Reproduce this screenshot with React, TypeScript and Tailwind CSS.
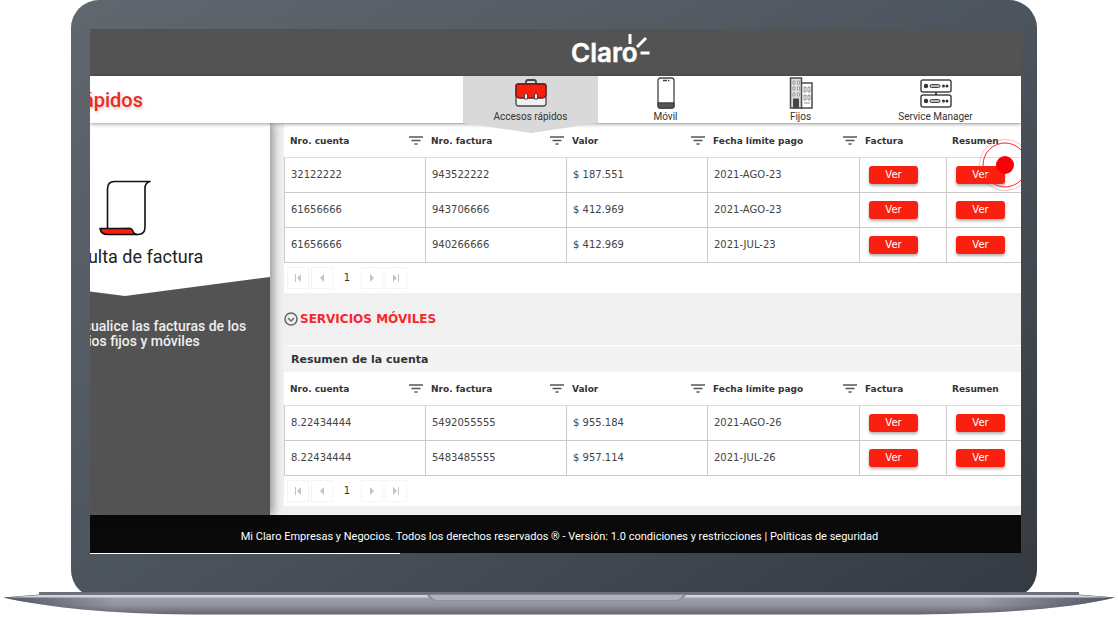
import React from 'react';

type Row = { cuenta: string; factura: string; valor: string; fecha: string };

const fijos: Row[] = [
  { cuenta: '32122222', factura: '943522222', valor: '$ 187.551', fecha: '2021-AGO-23' },
  { cuenta: '61656666', factura: '943706666', valor: '$ 412.969', fecha: '2021-AGO-23' },
  { cuenta: '61656666', factura: '940266666', valor: '$ 412.969', fecha: '2021-JUL-23' },
];

const moviles: Row[] = [
  { cuenta: '8.22434444', factura: '5492055555', valor: '$ 955.184', fecha: '2021-AGO-26' },
  { cuenta: '8.22434444', factura: '5483485555', valor: '$ 957.114', fecha: '2021-JUL-26' },
];

function ClaroLogo() {
  return (
    <svg width="80" height="34" viewBox="0 0 80 34" role="img" aria-label="Claro">
      <text x="0" y="28" fontSize="26" fontWeight="600" fill="#fff" stroke="#fff" strokeWidth=".5" fontFamily="Inter, sans-serif">Claro</text>
      <path d="M59 0v10M66 13l9-9M69.500 19h9" stroke="#fff" strokeWidth="3" fill="none" />
    </svg>
  );
}

function BriefcaseIcon() {
  return (
    <svg width="32" height="30" viewBox="0 0 32 30" fill="none" stroke="#444" strokeWidth="1.300">
      <path d="M11 4.500V3q0-2 2-2h6q2 0 2 2v1.500" strokeWidth="1.800" />
      <rect x="1" y="5" width="30" height="22" rx="2.500" fill="#f1f1f1" />
      <path d="M3 5h26q2 0 2 2v8q0 4-4 4H5q-4 0-4-4V7q0-2 2-2z" fill="#fb1d0e" stroke="#5a2020" />
      <path d="M9.500 20v-4q0-1.500 1.500-1.500t1.500 1.500v4h-3zM19.500 20v-4q0-1.500 1.500-1.500t1.500 1.500v4h-3z" fill="#eee" strokeWidth="1" />
    </svg>
  );
}

function PhoneIcon() {
  return (
    <svg width="18" height="32" viewBox="0 0 18 32" fill="none" stroke="#444" strokeWidth="1.300">
      <rect x="1" y="1" width="16" height="30" rx="2.500" fill="#fff" />
      <path d="M1 26h16v3q0 2-2 2H3q-2 0-2-2z" fill="#555" />
      <path d="M6 3.500h4M11 3.500h1.500" />
    </svg>
  );
}

function BuildingIcon() {
  return (
    <svg width="24" height="32" viewBox="0 0 24 32" fill="none" stroke="#4a4a4a">
      <rect x="12" y="6" width="11" height="25" fill="#fff" strokeWidth="1.500" />
      <rect x="1.500" y="1" width="11" height="30" fill="#ddd" strokeWidth="1.500" />
      <rect x="4.500" y="22" width="5" height="9" fill="#444" />
      <path d="M4 4h2v3H4zM8.500 4h2v3h-2zM4 10h2v3H4zM8.500 10h2v3h-2zM4 16h2v3H4zM8.500 16h2v3h-2z" fill="#fff" stroke="#888" strokeWidth=".8" />
      <path d="M15 10h2v5h-2zM19 10h2v5h-2zM15 18h2v5h-2zM19 18h2v5h-2zM15 26h6" stroke="#777" strokeWidth=".8" />
    </svg>
  );
}

function ServerIcon() {
  return (
    <svg width="32" height="30" viewBox="0 0 32 30" fill="none" stroke="#444" strokeWidth="1.500">
      <rect x="1" y="1" width="30" height="12" rx="2" />
      <rect x="1" y="16" width="30" height="12" rx="2" />
      <path d="M16 13v3" strokeWidth="2" />
      <rect x="10" y="5.500" width="10" height="3" rx="1.500" fill="#bbb" strokeWidth="1" />
      <rect x="10" y="20.500" width="10" height="3" rx="1.500" fill="#bbb" strokeWidth="1" />
      <g fill="#333" stroke="none">
        <circle cx="6" cy="7" r="2.200" />
        <circle cx="6" cy="22" r="2.200" />
        <circle cx="23.500" cy="7" r="1.500" />
        <circle cx="27" cy="7" r="1.500" />
        <circle cx="23.500" cy="22" r="1.500" />
        <circle cx="27" cy="22" r="1.500" />
      </g>
    </svg>
  );
}

function InvoiceIcon() {
  return (
    <svg width="52" height="56" viewBox="0 0 52 56" fill="none" stroke="#111" strokeWidth="1.600" strokeLinejoin="round">
      <path d="M8.500 49V9q0-7.500 7-7.500H51q-5 1-5 7V47q0 7.500-7 7.500h-2q-4-1-6-6z" fill="#fff" />
      <path d="M1 48.500h30q2 0 3 3t4 3H9q-7 0-8-6z" fill="#fb1d0e" />
    </svg>
  );
}

function FilterIcon() {
  return (
    <svg width="14" height="9" viewBox="0 0 14 9" stroke="#555" strokeWidth="1.300">
      <path d="M0 1h14M2.500 4.500h9M5.500 8h3" />
    </svg>
  );
}

function HeadCell({ label, filter }: { label: string; filter?: boolean }) {
  return (
    <th scope="col" className="h-[34px] border-b border-[#dcdcdc] p-0 pr-[2px] pl-[6px] text-left text-[9px] leading-4 font-bold text-[#333]">
      <div className="flex items-center justify-between whitespace-nowrap">
        {label}
        {filter && (
          <button type="button" aria-label={`Filtrar ${label}`}>
            <FilterIcon />
          </button>
        )}
      </div>
    </th>
  );
}

function VerButton() {
  return (
    <button type="button" className="block h-[18px] w-[49px] rounded-[3px] bg-[#fa2010] text-[10px] leading-4 text-white shadow-[0_2px_3px_rgba(0,0,0,0.3)]">
      Ver
    </button>
  );
}

function InvoiceTable({ rows }: { rows: Row[] }) {
  return (
    <table className="w-full table-fixed border-separate border-spacing-0 bg-white">
      <colgroup>
        <col className="w-[141px]" />
        <col className="w-[141px]" />
        <col className="w-[141px]" />
        <col className="w-[152px]" />
        <col className="w-[87px]" />
        <col />
      </colgroup>
      <thead>
        <tr>
          <HeadCell label="Nro. cuenta" filter />
          <HeadCell label="Nro. factura" filter />
          <HeadCell label="Valor" filter />
          <HeadCell label="Fecha límite pago" filter />
          <HeadCell label="Factura" />
          <HeadCell label="Resumen" />
        </tr>
      </thead>
      <tbody className="text-[10px] leading-4 text-[#444] [&_td]:h-[35px] [&_td]:border-b [&_td]:border-l [&_td]:border-[#cbcbcb] [&_td]:py-0 [&_td]:pr-0 [&_td]:pl-[6px]">
        {rows.map((row) => (
          <tr key={row.factura}>
            <td>{row.cuenta}</td>
            <td>{row.factura}</td>
            <td>{row.valor}</td>
            <td>{row.fecha}</td>
            <td><div className="pl-[3px]"><VerButton /></div></td>
            <td><div className="pl-[3px]"><VerButton /></div></td>
          </tr>
        ))}
      </tbody>
    </table>
  );
}

function PagerButton({ label, path }: { label: string; path: string }) {
  return (
    <button type="button" aria-label={label} className="flex size-[22px] items-center justify-center border border-[#f5f5f5]">
      <svg width="8" height="8" viewBox="0 0 8 8" fill="#c4c4c4"><path d={path} /></svg>
    </button>
  );
}

function Pager() {
  return (
    <div className="flex h-[30px] items-center gap-[2px] bg-white pl-[3px]">
      <PagerButton label="Primera página" path="M1 0h1v8H1zM7 0v8L3 4z" />
      <PagerButton label="Página anterior" path="M6 0v8L2 4z" />
      <span className="w-[24px] text-center text-[10px] leading-4 text-[#333]">1</span>
      <PagerButton label="Página siguiente" path="M2 0v8l4-4z" />
      <PagerButton label="Última página" path="M6 0h1v8H6zM1 0v8l4-4z" />
    </div>
  );
}

function NavTab({ label, active, children }: { label: string; active?: boolean; children: React.ReactNode }) {
  return (
    <a
      href="#"
      className={`relative flex w-[135px] flex-col items-center pt-[1px] text-[10px] leading-4 text-[#333] ${active ? 'bg-[#d9d9d9]' : ''}`}
    >
      <span className="flex h-[32px] shrink-0 items-end">{children}</span>
      <span>{label}</span>
      {active && (
        <svg className="absolute top-full left-0 h-[10px] w-full" viewBox="0 0 135 10" preserveAspectRatio="none">
          <path d="M0 0h135L68 10z" fill="#d9d9d9" />
        </svg>
      )}
    </a>
  );
}

function LaptopBase() {
  return (
    <svg className="relative -mt-[6px] block h-[25px] w-full" viewBox="0 0 1118 25" preserveAspectRatio="none" aria-hidden="true">
      <defs>
        <linearGradient id="base" x1="0" y1="0" x2="0" y2="1">
          <stop offset="0" stopColor="#a3a6b0" />
          <stop offset=".55" stopColor="#90939e" />
          <stop offset="1" stopColor="#62656e" />
        </linearGradient>
        <linearGradient id="tips" x1="0" y1="0" x2="1" y2="0">
          <stop offset="0" stopColor="#3f434c" stopOpacity=".8" />
          <stop offset=".1" stopColor="#3f434c" stopOpacity="0" />
          <stop offset=".88" stopColor="#3f434c" stopOpacity="0" />
          <stop offset="1" stopColor="#3f434c" stopOpacity=".8" />
        </linearGradient>
      </defs>
      <path d="M39 0h1040v4H39z" fill="#6a6f7b" />
      <path d="M3 5.500L40 2.500H1078L1115 5.500C1070 17 990 22.500 900 22.500H190C110 22 45 15 3 5.500z" fill="url(#base)" />
      <path d="M3 5.500L40 2.500H1078L1115 5.500C1070 17 990 22.500 900 22.500H190C110 22 45 15 3 5.500z" fill="url(#tips)" />
      <path d="M8 5.500L40 3H1078L1110 5.500z" fill="#cfd6db" />
      <path d="M427 2.500H686Q684 9 676 9H437Q429 9 427 2.500z" fill="#92929c" />
      <path d="M430 2.500H683Q681 8 674 8H439Q432 8 430 2.500z" fill="#b3b0ba" />
      <path d="M40 0H1078V2.500H40z" fill="#6a6f7b" />
    </svg>
  );
}

export default function App() {
  return (
    <div className="overflow-hidden bg-white font-['Roboto',sans-serif]">
      {/* Laptop lid */}
      <div className="mr-[81px] ml-[71px] rounded-[28px] bg-linear-to-br from-[#60676e] via-[#4c545d] to-[#353a42] pt-[29px] pr-[16px] pb-[44px] pl-[19px]">
        {/* Screen */}
        <div className="relative overflow-hidden bg-[#f0f0f0]">
          <header className="flex h-[47px] items-start justify-center bg-[#535353] pt-[5px] pl-[110px]">
            <ClaroLogo />
          </header>

          <nav className="relative z-20 flex h-[47px] bg-white shadow-[0_1px_4px_rgba(0,0,0,0.4)]">
            <div className="flex w-[53px] items-center justify-end text-xl font-medium whitespace-nowrap text-[#ee2a1e] [text-shadow:1px_2px_3px_rgba(0,0,0,0.2)]">
              Accesos rápidos
            </div>
            <div className="ml-auto flex pr-[18px]">
              <NavTab label="Accesos rápidos" active><BriefcaseIcon /></NavTab>
              <NavTab label="Móvil"><PhoneIcon /></NavTab>
              <NavTab label="Fijos"><BuildingIcon /></NavTab>
              <NavTab label="Service Manager"><ServerIcon /></NavTab>
            </div>
          </nav>

          <div className="flex">
            {/* Sidebar card */}
            <aside className="relative z-10 flex w-[180px] shrink-0 justify-end overflow-hidden bg-[#535353] shadow-[3px_0_9px_rgba(0,0,0,0.4)]">
              <div className="w-[290px] shrink-0 text-center">
                <div className="flex flex-col items-center bg-white pt-[57px] pb-[6px]">
                  <InvoiceIcon />
                  <h2 className="mt-[7px] text-lg leading-7 text-[#222]">Consulta de factura</h2>
                </div>
                <svg className="block h-[19px] w-full" viewBox="0 0 290 19" preserveAspectRatio="none">
                  <path d="M0 0h290L145 19z" fill="#fff" />
                </svg>
                <p className="pt-[23px] text-[14px] leading-[15px] font-medium text-[#eee]">
                  Consulta y visualice las facturas de los
                  <br />
                  servicios fijos y móviles
                </p>
              </div>
            </aside>

            <main className="min-w-0 flex-1 pb-[9px] pl-[14px] font-['DejaVu_Sans',sans-serif]">
              <section className="pt-px">
                <InvoiceTable rows={fijos} />
                <Pager />
              </section>

              <h2 className="flex h-[52px] items-center gap-[2px] text-xs font-bold text-[#f5282e]">
                <svg width="14" height="14" viewBox="0 0 14 14" fill="none" stroke="#666" strokeWidth="1.500">
                  <circle cx="7" cy="7" r="6" />
                  <path d="M4 6l3 3 3-3" />
                </svg>
                SERVICIOS MÓVILES
              </h2>

              <section>
                <h3 className="h-[27px] border-t border-white bg-[#f3f3f3] pl-[7px] text-[11px] leading-[27px] font-bold text-[#333]">
                  Resumen de la cuenta
                </h3>
                <InvoiceTable rows={moviles} />
                <Pager />
              </section>
            </main>
          </div>

          <footer className="flex h-[38px] items-center justify-center bg-[#090909] pt-[5px] pl-[8px] text-[11px] leading-4 whitespace-nowrap text-white">
            <p>
              Mi Claro Empresas y Negocios. Todos los derechos reservados ® - Versión: 1.0{' '}
              <a href="#">condiciones y restricciones</a> | <a href="#">Políticas de seguridad</a>
            </p>
          </footer>

          {/* Click pointer */}
          <svg className="absolute top-[108px] right-[-12px] z-30" width="56" height="56" viewBox="0 0 56 56" fill="none" stroke="#f5222d">
            <circle cx="28" cy="28" r="25.500" strokeOpacity=".3" />
            <circle cx="28" cy="28" r="22" />
            <circle cx="28" cy="28" r="9" fill="#fb0007" stroke="none" />
          </svg>
        </div>
        <div className="h-px w-1/3 bg-white" />
      </div>
      <LaptopBase />
    </div>
  );
}
